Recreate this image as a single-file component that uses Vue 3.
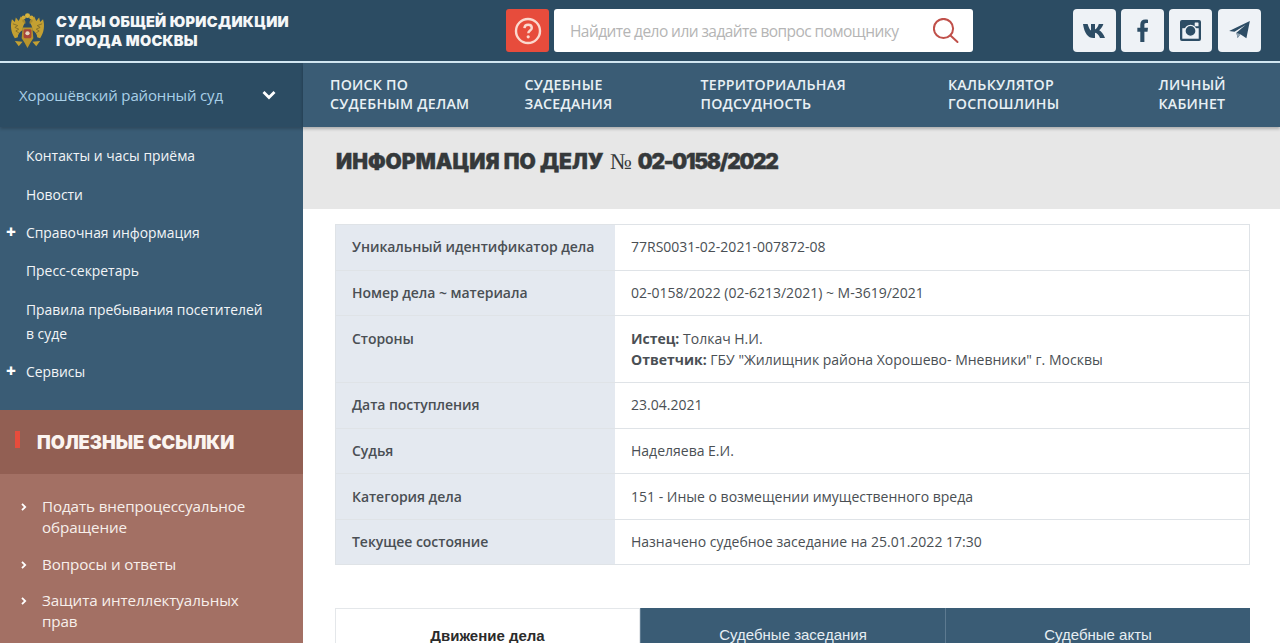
<template>
  <div class="page">
    <header class="top">
      <div class="brand">
        <svg class="crest" viewBox="0 0 36 40" width="35" height="36" preserveAspectRatio="none">
          <path d="M16 10 C14 13 13 15 13 19 C10 21 8 24 8 27 L5 28 C1 22 0 14 2 7 L5 10 L6 5 L9 9 L11 4 C13 6 15 8 16 10 Z" fill="#c4a032" />
          <path d="M20 10 C22 13 23 15 23 19 C26 21 28 24 28 27 L31 28 C35 22 36 14 34 7 L31 10 L30 5 L27 9 L25 4 C23 6 21 8 20 10 Z" fill="#c4a032" />
          <path d="M3 12 L8 14 L5 16 L9 18 L6 20 L9 22" fill="none" stroke="#7e6a2a" stroke-width="0.9" />
          <path d="M33 12 L28 14 L31 16 L27 18 L30 20 L27 22" fill="none" stroke="#7e6a2a" stroke-width="0.9" />
          <path d="M12 28 L13 16 L23 16 L24 28 L21 33 L18 39 L15 33 Z" fill="#b8942c" />
          <rect x="14" y="18" width="8" height="10" rx="1.5" fill="#a8453a" />
          <circle cx="18" cy="22.5" r="2.2" fill="#e3d6bd" />
          <path d="M13 10 C12 7 14 6 15 8 L16 12 Z M23 10 C24 7 22 6 21 8 L20 12 Z" fill="#a98a2c" />
          <circle cx="14" cy="5" r="2.2" fill="#d1ab35" />
          <circle cx="22" cy="5" r="2.2" fill="#d1ab35" />
          <circle cx="18" cy="3" r="2.6" fill="#d8b53e" />
          <path d="M5 31 L13 32 L9 37 Z M31 31 L23 32 L27 37 Z" fill="#c4a032" />
        </svg>
        <div class="brand-name">СУДЫ ОБЩЕЙ ЮРИСДИКЦИИ<br />ГОРОДА МОСКВЫ</div>
      </div>

      <div class="search-wrap">
        <div class="help-btn">
          <svg viewBox="0 0 28 28" width="28" height="28">
            <circle cx="14" cy="14" r="12" fill="none" stroke="#fbd9cf" stroke-width="2.4" />
            <path d="M10.4 11.2 C10.6 8.9 12.2 7.8 14.2 7.8 C16.3 7.8 17.8 9.1 17.8 10.9 C17.8 13.4 14.3 13.6 14.3 16.2" fill="none" stroke="#fbd9cf" stroke-width="2.4" />
            <circle cx="14.2" cy="19.8" r="1.6" fill="#fbd9cf" />
          </svg>
        </div>
        <div class="search">
          <span class="placeholder">Найдите дело или задайте вопрос помощнику</span>
          <svg viewBox="0 0 26 26" width="26" height="26">
            <circle cx="10.5" cy="10.5" r="9.6" fill="none" stroke="#c0504a" stroke-width="2" />
            <path d="M17.5 17.5 L24.5 24" stroke="#c0504a" stroke-width="2" stroke-linecap="round" />
          </svg>
        </div>
      </div>

      <div class="socials">
        <a class="soc">
          <svg viewBox="0 0 24 14" width="24" height="14">
            <path d="M0 0 H4.6 C5.6 3.4 6.8 5.8 8 6.6 V0 H12 V5.4 C13.6 5 15 2.8 15.8 0 H20.4 C19.6 3 17.6 5.2 16.2 6.3 C18 7.4 20.6 9.8 22 14 H17 C16 11.2 14.2 9.2 12 8.8 V14 H10.4 C5 14 1.4 9.4 0 0 Z" fill="#2d4d65" />
          </svg>
        </a>
        <a class="soc">
          <svg viewBox="0 0 14 28" width="11.5" height="23">
            <path d="M4 28 V15.4 H0.4 V10.6 H4 V7 C4 2.8 6.4 0.6 10 0.6 C11.6 0.6 13 0.7 13.6 0.8 V5 H11.2 C9.4 5 9 5.9 9 7.2 V10.6 H13.4 L12.8 15.4 H9 V28 Z" fill="#2d4d65" />
          </svg>
        </a>
        <a class="soc">
          <svg viewBox="0 0 22 22" width="21" height="21">
            <rect width="22" height="22" rx="2" fill="#2d4d65" />
            <rect x="2.4" y="8.6" width="17.2" height="11" fill="#eef2f6" />
            <circle cx="11" cy="11.4" r="5.8" fill="#2d4d65" stroke="#eef2f6" stroke-width="1.4" />
            <rect x="15.4" y="2.6" width="4" height="4" rx="0.6" fill="#eef2f6" />
          </svg>
        </a>
        <a class="soc">
          <svg viewBox="0 0 24 22" width="21" height="19">
            <path d="M0 11.5 L24 0 L20 20 L13 15.2 L9.8 19.6 L8.4 13.6 L19 4.6 L6.2 12.4 Z" fill="#2d4d65" />
            <path d="M8.4 13.6 L9.8 19.6 L13 15.2 Z" fill="#8fa3b2" />
          </svg>
        </a>
      </div>
    </header>

    <div class="layout">
      <aside class="side">
        <div class="court">
          <span>Хорошёвский районный суд</span>
          <svg viewBox="0 0 14 10" width="14" height="10">
            <path d="M1.5 2 L7 7.5 L12.5 2" fill="none" stroke="#fff" stroke-width="2.8" />
          </svg>
        </div>

        <ul class="side-menu">
          <li v-for="item in sideMenu" :key="item.title" :class="{ plus: item.plus }">{{ item.title }}</li>
        </ul>

        <div class="links-head"><i></i>ПОЛЕЗНЫЕ ССЫЛКИ</div>
        <ul class="links">
          <li v-for="link in usefulLinks" :key="link">
            <svg viewBox="0 0 6 8" width="6" height="8">
              <path d="M1 0.8 L4.2 4 L1 7.2" fill="none" stroke="#fff" stroke-width="1.8" />
            </svg>
            <span>{{ link }}</span>
          </li>
        </ul>
      </aside>

      <main class="content">
        <nav class="nav">
          <a v-for="item in navItems" :key="item[0]">{{ item[0] }}<br />{{ item[1] }}</a>
        </nav>

        <div class="title-bar">
          <h1>ИНФОРМАЦИЯ ПО ДЕЛУ <span class="num">№</span> <span class="case-no">02-0158/2022</span></h1>
        </div>

        <div class="info">
          <div v-for="row in rows" :key="row.label" class="info-row">
            <div class="info-label">{{ row.label }}</div>
            <div class="info-value" v-if="row.value">{{ row.value }}</div>
            <div class="info-value" v-else>
              <div><b>Истец:</b> Толкач Н.И.</div>
              <div><b>Ответчик:</b> ГБУ "Жилищник района Хорошево- Мневники" г. Москвы</div>
            </div>
          </div>
        </div>

        <div class="tabs">
          <div v-for="(tab, i) in tabs" :key="tab" class="tab" :class="{ active: i === 0 }">{{ tab }}</div>
        </div>
      </main>
    </div>
  </div>
</template>

<script setup>
const sideMenu = [
  { title: 'Контакты и часы приёма' },
  { title: 'Новости' },
  { title: 'Справочная информация', plus: true },
  { title: 'Пресс-секретарь' },
  { title: 'Правила пребывания посетителей в суде' },
  { title: 'Сервисы', plus: true }
];

const usefulLinks = [
  'Подать внепроцессуальное обращение',
  'Вопросы и ответы',
  'Защита интеллектуальных прав'
];

const navItems = [
  ['ПОИСК ПО', 'СУДЕБНЫМ ДЕЛАМ'],
  ['СУДЕБНЫЕ', 'ЗАСЕДАНИЯ'],
  ['ТЕРРИТОРИАЛЬНАЯ', 'ПОДСУДНОСТЬ'],
  ['КАЛЬКУЛЯТОР', 'ГОСПОШЛИНЫ'],
  ['ЛИЧНЫЙ', 'КАБИНЕТ']
];

const rows = [
  { label: 'Уникальный идентификатор дела', value: '77RS0031-02-2021-007872-08' },
  { label: 'Номер дела ~ материала', value: '02-0158/2022 (02-6213/2021) ~ М-3619/2021' },
  { label: 'Стороны' },
  { label: 'Дата поступления', value: '23.04.2021' },
  { label: 'Судья', value: 'Наделяева Е.И.' },
  { label: 'Категория дела', value: '151 - Иные о возмещении имущественного вреда' },
  { label: 'Текущее состояние', value: 'Назначено судебное заседание на 25.01.2022 17:30' }
];

const tabs = ['Движение дела', 'Судебные заседания', 'Судебные акты'];
</script>

<style>
html,
body {
  margin: 0;
  background: #fff;
  overflow: hidden;
}
</style>

<style scoped>
.page {
  height: 643px;
  overflow: hidden;
  font-family: "Open Sans", sans-serif;
  color: #4a4f54;
}

.top {
  height: 61px;
  background: #2c4c63;
  border-bottom: 2px solid #d3e8f3;
  display: flex;
  align-items: center;
}

.brand {
  width: 506px;
  flex: none;
  display: flex;
  align-items: center;
  padding-left: 10px;
  box-sizing: border-box;
  gap: 11px;
}

.brand-name {
  font-family: Inter, sans-serif;
  font-weight: 900;
  font-size: 14.5px;
  line-height: 19px;
  letter-spacing: 0.3px;
  color: #f5f7f8;
  margin-top: 1px;
}

.search-wrap {
  display: flex;
  gap: 5px;
  width: 467px;
  flex: none;
  height: 43px;
}

.help-btn {
  width: 43px;
  height: 43px;
  background: #e74c3c;
  border-radius: 3px;
  display: flex;
  align-items: center;
  justify-content: center;
}

.search {
  flex: 1;
  background: #fff;
  border-radius: 3px;
  display: flex;
  align-items: center;
  justify-content: space-between;
  padding: 0 14px 0 16px;
}

.placeholder {
  font-size: 15.5px;
  color: #b5b5b5;
  letter-spacing: -0.57px;
}

.socials {
  margin-left: auto;
  margin-right: 19px;
  display: flex;
  gap: 5px;
}

.soc {
  width: 43px;
  height: 43px;
  background: #eef2f6;
  border-radius: 4px;
  display: flex;
  align-items: center;
  justify-content: center;
}

.soc:last-child {
  margin-left: 1px;
}

.layout {
  display: flex;
  align-items: flex-start;
}

.side {
  width: 303px;
  flex: none;
  height: 580px;
  background: #3a5c75;
  color: #f2f5f7;
}

.court {
  height: 64px;
  background: #2c4c63;
  display: flex;
  align-items: center;
  justify-content: space-between;
  padding: 0 27px 0 19px;
  font-size: 15px;
  color: #a9d0e8;
  letter-spacing: -0.15px;
  box-shadow: 0 2px 3px rgba(0, 0, 0, 0.2);
  position: relative;
}

.side-menu {
  list-style: none;
  margin: 0;
  padding: 17px 30px 27px 26px;
  height: 283px;
  box-sizing: border-box;
  font-size: 13.9px;
  line-height: 24px;
}

.side-menu li {
  position: relative;
  margin-bottom: 14.4px;
}

.side-menu li:first-child {
  margin-bottom: 15.4px;
}

.side-menu li:nth-child(2) {
  margin-bottom: 13.4px;
}

.side-menu li.plus::before {
  content: "+";
  position: absolute;
  left: -20px;
  top: -1px;
  font-weight: 800;
  font-size: 17px;
  color: #fff;
}

.links-head {
  height: 64px;
  background: #925f53;
  display: flex;
  align-items: center;
  font-family: Inter, sans-serif;
  font-weight: 900;
  font-size: 18.3px;
  color: #fbf4f0;
  padding-left: 15px;
  box-sizing: border-box;
}

.links-head i {
  width: 5px;
  height: 17px;
  background: #e74c3c;
  margin-right: 17px;
  margin-top: -6px;
}

.links {
  list-style: none;
  margin: 0;
  padding: 22px 40px 0 21px;
  background: #a37064;
  height: 170px;
  color: #f7efeb;
  font-size: 15.2px;
  line-height: 21px;
  letter-spacing: -0.1px;
}

.links li {
  display: flex;
  align-items: flex-start;
  gap: 15px;
  margin-bottom: 15.5px;
}

.links svg {
  flex: none;
  margin-top: 7px;
}

.content {
  flex: 1;
  min-width: 0;
}

.nav {
  height: 64px;
  background: #3a5c75;
  display: flex;
  align-items: center;
  padding: 0 0 2px 27px;
  box-sizing: border-box;
  box-shadow: 0 2px 3px rgba(0, 0, 0, 0.25);
  position: relative;
}

.nav a {
  font-weight: 600;
  font-size: 14.2px;
  line-height: 19px;
  color: #e8f0f4;
  letter-spacing: 0.25px;
  white-space: nowrap;
}

.nav a:nth-child(2) {
  margin-left: 55px;
}

.nav a:nth-child(3) {
  margin-left: 88px;
}

.nav a:nth-child(4) {
  margin-left: 102px;
}

.nav a:nth-child(5) {
  margin-left: 99px;
}

.title-bar {
  height: 82px;
  background: #e7e7e7;
  padding: 21px 33px 0;
  box-sizing: border-box;
}

.title-bar h1 {
  margin: 0;
  font-family: Inter, sans-serif;
  font-weight: 900;
  font-size: 21px;
  line-height: 28px;
  color: #35393b;
  -webkit-text-stroke: 0.4px #35393b;
}

.title-bar .num {
  font-family: "Liberation Serif", serif;
  font-weight: 400;
  font-size: 23px;
  margin-left: 2px;
  -webkit-text-stroke: 0;
}

.title-bar .case-no {
  letter-spacing: -1.3px;
  margin-left: 2px;
}

.info {
  margin: 15px 30px 0 32px;
  border: 1px solid #dfe3e7;
  border-bottom: 0;
}

.info-row {
  display: grid;
  grid-template-columns: 279px 1fr;
  border-bottom: 1px solid #dfe3e7;
  font-size: 14px;
  line-height: 21px;
}

.info-label {
  background: #e4e9f0;
  padding: 11.4px 16px 12.25px;
  font-weight: 600;
  color: #4a4f54;
  letter-spacing: -0.05px;
}

.info-value {
  padding: 11.4px 16px 12.25px;
}

.info-value b {
  font-weight: 700;
}

.tabs {
  margin: 43px 30px 0 32px;
  display: grid;
  grid-template-columns: repeat(3, 1fr);
  height: 60px;
  font-family: "Liberation Sans", sans-serif;
  font-size: 15px;
}

.tab {
  background: #3a5c75;
  color: #e6eef3;
  text-align: center;
  padding-top: 18px;
  box-sizing: border-box;
  border-left: 1px solid #5d7a90;
}

.tab.active {
  background: #fff;
  color: #2b2b2b;
  font-weight: 700;
  border: 1px solid #e4e7ea;
  border-bottom: 0;
}
</style>
